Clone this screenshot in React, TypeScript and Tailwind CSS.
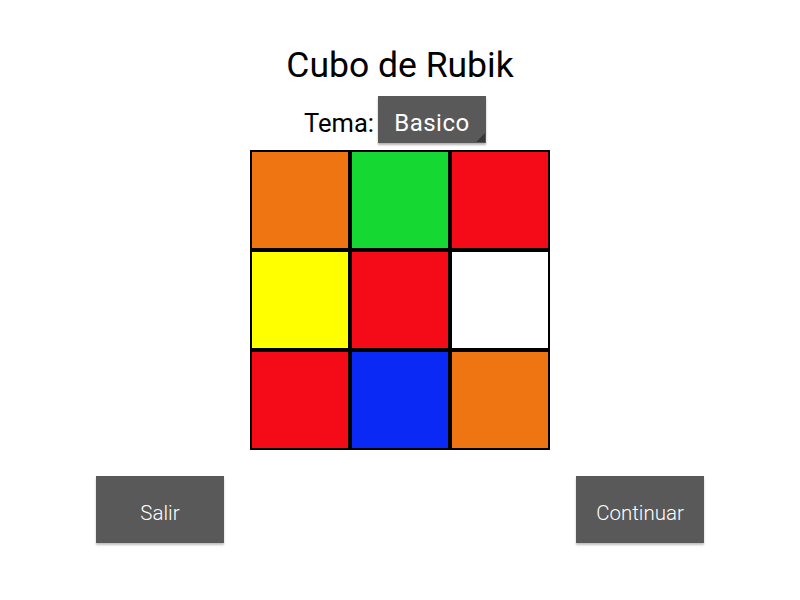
import React from "react";

const colors = [
  "#ee7512", "#15d932", "#f50b18",
  "#ffff00", "#f50b18", "#ffffff",
  "#f50b18", "#0b29f5", "#ee7512",
];

export default function App() {
  return (
    <div className="w-[800px] h-[600px] bg-white flex flex-col items-center" style={{ fontFamily: "Roboto, 'Noto Sans', sans-serif" }}>
      <h1 className="mt-[44px] h-[42px] leading-[42px] text-[35.5px] text-black">Cubo de Rubik</h1>
      <div className="mt-[10px] mr-[10px] flex items-center h-[47px]">
        <span className="text-[25.5px] text-black mr-[4px] pt-[8px]">Tema:</span>
        <div className="relative w-[108px] h-[47px] bg-[#595959] shadow-[0_2px_2px_rgba(0,0,0,0.3)] flex items-center justify-center text-white text-[24px] tracking-[0.5px] pt-[6px]">
          Basico
          <div className="absolute right-[1px] bottom-[1px] w-0 h-0 border-l-[9px] border-l-transparent border-b-[9px] border-b-[#383838]" />
        </div>
      </div>
      <div className="mt-[7px] grid grid-cols-3 w-[300px] h-[300px]">
        {colors.map((c, i) => (
          <div key={i} className="w-[100px] h-[100px] border-2 border-black" style={{ backgroundColor: c }} />
        ))}
      </div>
      <div className="mt-[26px] w-[608px] flex justify-between">
        <div className="w-[128px] h-[67px] bg-[#595959] shadow-[0_2px_2px_rgba(0,0,0,0.25)] flex items-center justify-center text-white text-[20.5px] font-light pt-[7px]">Salir</div>
        <div className="w-[128px] h-[67px] bg-[#595959] shadow-[0_2px_2px_rgba(0,0,0,0.25)] flex items-center justify-center text-white text-[20.5px] font-light pt-[7px]">Continuar</div>
      </div>
    </div>
  );
}
